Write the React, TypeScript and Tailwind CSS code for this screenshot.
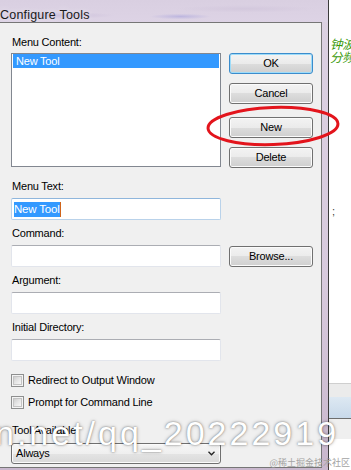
import React from "react";

function Btn({ children, def = false, className = "" }: { children: React.ReactNode; def?: boolean; className?: string }) {
  const edge = def
    ? "border-[#3b8ccc] shadow-[inset_0_0_0_1px_#9edcf9]"
    : "border-[#707070] shadow-[inset_0_0_0_1px_#fbfbfb]";
  return (
    <div
      className={`h-[21px] w-[84px] shrink-0 rounded-[3px] border ${edge} bg-[linear-gradient(to_bottom,#f3f3f3_0%,#ebebeb_50%,#dddddd_50%,#cfcfcf_100%)] flex items-center justify-center text-[11px] leading-[13px] text-black ${className}`}
    >
      {children}
    </div>
  );
}

function Label({ children, className = "" }: { children: React.ReactNode; className?: string }) {
  return <div className={`h-[13px] pl-[1px] text-[11px] leading-[13px] text-black ${className}`}>{children}</div>;
}

function Input({ className = "" }: { className?: string }) {
  return (
    <div
      className={`h-[22px] w-[210px] shrink-0 rounded-[2px] border border-[#e2e5ec] border-t-[#abadb3] bg-white ${className}`}
    />
  );
}

function Check({ label, className = "" }: { label: string; className?: string }) {
  return (
    <div className={`flex h-[13px] items-center gap-[4px] ${className}`}>
      <div className="h-[13px] w-[13px] shrink-0 border border-[#8e8f8f] bg-[#f4f4f4] p-[1px]">
        <div className="h-full w-full border border-[#c4c4c4] bg-[linear-gradient(135deg,#cfcfcf_0%,#e6e6e6_50%,#f7f7f7_100%)]" />
      </div>
      <span className="text-[11px] leading-[13px] text-black">{label}</span>
    </div>
  );
}

export default function App() {
  return (
    <div className="relative flex h-[470px] w-[351px] overflow-hidden bg-white font-['Liberation_Sans',Arial,sans-serif] tracking-[-0.2px]">
      {/* Window frame */}
      <div className="flex h-full w-[329px] shrink-0 flex-col border-r border-[#3b3b3b] bg-[linear-gradient(to_bottom,#dcd1e2,#d8cadd_60%,#c9b7cd)]">
        {/* Title bar */}
        <div className="h-[22px] shrink-0 bg-[radial-gradient(ellipse_at_16%_70%,#c8bcd8_0%,transparent_16%),radial-gradient(ellipse_at_55%_75%,#bdb6df_0%,transparent_12%),radial-gradient(ellipse_at_75%_40%,#d3c8dd_0%,transparent_20%),linear-gradient(to_bottom,#d9cfe1,#ddd3e5)] pl-[0px] pt-[2px]">
          <span className="text-[12.5px] leading-[15px] tracking-[0.2px] text-[#1a1a1a] [text-shadow:0_0_6px_rgba(255,255,255,0.7)]">
            Configure Tools
          </span>
        </div>

        {/* Dialog client area */}
        <div className="flex h-[446px] w-[322px] shrink-0 flex-col border-t border-r border-b border-[#767676] bg-[#f0f0f0] pl-[11px] pt-[13px]">
          <Label>Menu Content:</Label>
          <div className="mt-[4px] flex gap-[8px]">
            <div className="h-[114px] w-[210px] shrink-0 border border-[#828790] bg-white px-[1px]">
              <div className="flex h-[14px] items-center bg-[#3399ff] pl-[3px] text-[11px] leading-[13px] text-white">
                New Tool
              </div>
            </div>
            <div className="flex flex-col">
              <Btn def>OK</Btn>
              <Btn className="mt-[9px]">Cancel</Btn>
              <Btn className="mt-[13px]">New</Btn>
              <Btn className="mt-[9px]">Delete</Btn>
            </div>
          </div>

          <Label className="mt-[12px]">Menu Text:</Label>
          <div className="mt-[5px] flex h-[22px] w-[210px] items-center rounded-[2px] border border-[#b9d2ea] border-t-[#8fb6dc] bg-white pl-[2px]">
            <span className="flex h-[15px] items-center bg-[#3399ff] text-[11.5px] leading-[15px] text-white">New Tool</span>
            <span className="h-[15px] w-[1px] bg-[#d0641a]" />
          </div>

          <Label className="mt-[7px]">Command:</Label>
          <div className="mt-[5px] flex items-start gap-[8px]">
            <Input />
            <Btn className="mt-[1px]">Browse...</Btn>
          </div>

          <Label className="mt-[7px]">Argument:</Label>
          <Input className="mt-[5px]" />

          <Label className="mt-[7px]">Initial Directory:</Label>
          <Input className="mt-[5px]" />

          <Check className="mt-[13px]" label="Redirect to Output Window" />
          <Check className="mt-[9px]" label="Prompt for Command Line" />

          <Label className="mt-[15px]">Tool Available:</Label>
          <div className="mt-[6px] flex h-[21px] w-[210px] items-center justify-between rounded-[3px] border border-[#707070] bg-[linear-gradient(to_bottom,#f6f6f6_0%,#efefef_50%,#e4e4e4_50%,#d9d9d9_100%)] pl-[4px] pr-[5px] shadow-[inset_0_0_0_1px_#fbfbfb]">
            <span className="text-[11px] leading-[13px] text-black">Always</span>
            <svg width="7" height="5" viewBox="0 0 7 5">
              <path d="M0.5 0.8 L3.5 3.8 L6.5 0.8" fill="none" stroke="#222" strokeWidth="1.3" />
            </svg>
          </div>
        </div>
      </div>

      {/* Right strip: editor behind the dialog */}
      <div className="flex h-full w-[22px] shrink-0 flex-col overflow-hidden bg-white">
        <div className="mt-[37px] whitespace-nowrap pl-[1px] font-['Noto_Sans_CJK_SC',sans-serif] text-[12.5px] italic leading-[13px] text-[#3a9a0c]">
          <div>钟波</div>
          <div>分频</div>
        </div>
        <div className="mt-[142px] h-[13px] pl-[3px] text-[11px] leading-[13px] text-[#404040]">;</div>
        <div className="mt-[165px] h-[14px] shrink-0 border-t border-[#cfcfcf] bg-[#ebebeb]" />
        <div className="h-[21px] shrink-0 bg-[linear-gradient(to_bottom,#dde8f2,#c8d9ea)]" />
        <div className="h-[1px] shrink-0 bg-[#6e6e6e]" />
        <div className="h-[20px] shrink-0 bg-[#efefef]" />
        <div className="flex-1 bg-white" />
      </div>

      {/* Red annotation ellipse */}
      <svg className="pointer-events-none absolute left-[204px] top-[104px]" width="138" height="44" viewBox="0 0 138 44">
        <ellipse cx="69" cy="22" rx="65" ry="18.5" transform="rotate(-2 69 22)" fill="none" stroke="#e3141c" strokeWidth="3" />
      </svg>

      {/* Watermarks */}
      <div className="pointer-events-none absolute left-[-5px] top-[416px] whitespace-nowrap text-[34px] leading-[34px] tracking-[3px] text-white [text-shadow:0_0_2px_rgba(0,0,0,0.5),0_0_4px_rgba(0,0,0,0.2)]">
        n.net/qq_20222919
      </div>
      <div className="pointer-events-none absolute bottom-[2px] right-[1px] font-['Noto_Sans_CJK_SC',sans-serif] text-[9px] leading-[10px] tracking-normal text-[#a3a3a3]">
        @稀土掘金技术社区
      </div>
    </div>
  );
}
